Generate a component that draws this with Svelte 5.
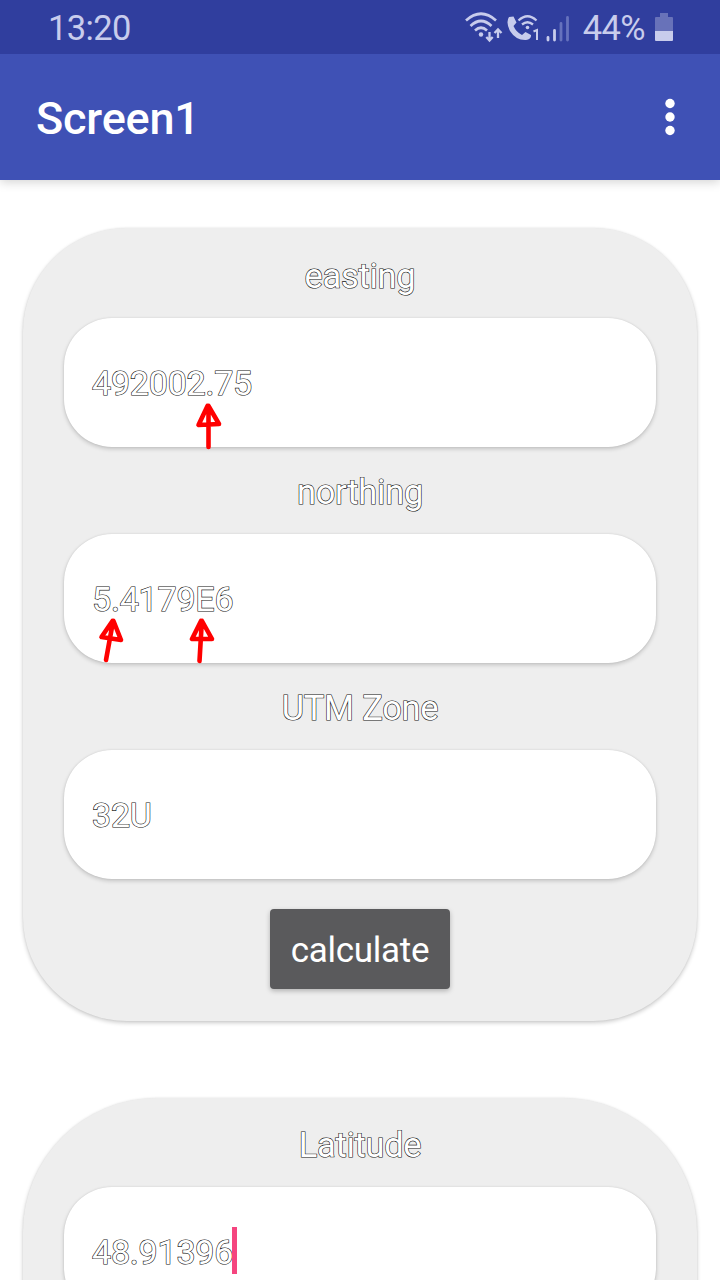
<script>
  const fields = [
    { label: 'easting', value: '492002.75', marks: [{ x: 131, y: 84, d: 'M13.500 45V10 M12.500 4 L3.500 23 L24 22 L13.500 4' }] },
    { label: 'northing', value: '5.4179E6', marks: [
      { x: 34, y: 83, d: 'M8 43 L14 10 M14.500 4 L3.500 20 L23 23 L15.500 4' },
      { x: 125, y: 83, d: 'M10.500 44 L12.500 10 M12 4 L3 22 L23 22 L13 4' }
    ] },
    { label: 'UTM Zone', value: '32U', marks: [] }
  ];
</script>

<div class="screen">
  <div class="status">
    <time>13:20</time>
    <div class="indicators">
      <svg width="112" height="36" viewBox="0 0 112 36" fill="none" stroke="#c8ccec">
        <g stroke-width="2.700">
          <path d="M2 11.500Q17 -2 32 11.500" />
          <path d="M6.500 17Q17 7 27.500 17" />
          <path d="M11 21.500Q17 16 23 21.500" />
        </g>
        <circle cx="17" cy="25.500" r="2.200" fill="#c8ccec" stroke="none" />
        <path d="M25.500 23V31.500M22.300 28L25.500 31.500L28.700 28M34 29V21M30.500 24L34 20.500L37.500 24" stroke-width="2.300" />
        <path d="M45 8L49.500 7.500L52.500 13.500L49.500 17Q52 23 58 26L61.500 23L67 26Q67.500 30 62 31Q52 31.500 46 22Q41.500 13 45 8Z" fill="#c8ccec" stroke="none" />
        <path d="M54.500 11.500Q63.500 3 72.500 11.500M58 15.500Q63.500 11 69 15.500" stroke-width="2.300" />
        <circle cx="63.500" cy="18.500" r="1.800" fill="#c8ccec" stroke="none" />
        <path d="M69.500 22.500L73 21V31" stroke-width="2" />
        <g stroke-linecap="round" stroke-width="2.800">
          <path d="M84 28.500V31" /><path d="M90.500 21.500V31" />
          <path d="M97 14.500V31M103.500 8.500V31" stroke="#6672bd" />
        </g>
      </svg>
      <span>44%</span>
      <svg class="battery" width="18" height="28" viewBox="0 0 18 28">
        <path d="M5 0H13V4H17Q18 4 18 5V18H0V5Q0 4 1 4H5Z" fill="#6872b9" />
        <path d="M0 18H18V27Q18 28 17 28H1Q0 28 0 27Z" fill="#c8ccec" />
      </svg>
    </div>
  </div>
  <header>
    <h1>Screen1</h1>
    <svg width="10" height="38" viewBox="0 0 10 38" fill="#fff">
      <circle cx="5" cy="5.500" r="4.700" /><circle cx="5" cy="19" r="4.700" /><circle cx="5" cy="32.500" r="4.700" />
    </svg>
  </header>
  <main>
    <section class="card">
      {#each fields as f}
        <div class="label outlined">{f.label}</div>
        <div class="field">
          <span class="outlined">{f.value}</span>
          {#each f.marks as m}
            <svg class="mark" style="left:{m.x}px;top:{m.y}px" width="27" height="49" viewBox="0 0 27 49"><path d={m.d} /></svg>
          {/each}
        </div>
      {/each}
      <button>calculate</button>
    </section>
    <section class="card">
      <div class="label outlined">Latitude</div>
      <div class="field"><span class="outlined">48.91396</span><i class="caret"></i></div>
    </section>
  </main>
</div>

<style>
  .screen { width: 720px; height: 1280px; overflow: hidden; background: #fff; font-family: Roboto, sans-serif; display: flex; flex-direction: column; }
  .status { position: relative; z-index: 1; flex: none; box-sizing: border-box; height: 54px; padding: 0 47px 0 48px; background: #303e9e; color: #c8ccec; display: flex; align-items: center; justify-content: space-between; font-size: 34.500px; }
  .status time, .status span { line-height: 54px; padding-top: 2px; letter-spacing: -.6px; }
  .indicators { display: flex; align-items: center; }
  .indicators span { margin: 0 10px 0 7px; }
  header { flex: none; box-sizing: border-box; height: 126px; padding: 0 45px 0 36px; background: #3f51b5; color: #fff; display: flex; align-items: center; justify-content: space-between; box-shadow: 0 2px 10px rgba(0,0,0,.18); }
  h1 { margin: 3px 0 0; font-size: 45px; font-weight: 500; line-height: 60px; letter-spacing: -.2px; }
  main { display: flex; flex-direction: column; gap: 77px; padding: 48px 23px 0; }
  .card { box-sizing: border-box; flex: none; height: 793px; padding: 3px 41px 0; border-radius: 104px; background: #eee; box-shadow: 0 2px 4px rgba(0,0,0,.2), 0 0 2px rgba(0,0,0,.08); display: flex; flex-direction: column; align-items: center; }
  .card + .card { padding-top: 2px; border-radius: 134px; }
  .label { height: 87px; line-height: 91px; font-size: 34.400px; letter-spacing: -.25px; }
  .outlined { color: #fff; -webkit-text-stroke: 1.200px #111; paint-order: stroke fill; }
  .field { position: relative; box-sizing: border-box; width: 100%; height: 129px; padding: 1px 28px 0; border-radius: 48px; background: #fff; box-shadow: 0 2px 4px rgba(0,0,0,.18), 0 0 2px rgba(0,0,0,.1); display: flex; align-items: center; font-size: 34px; letter-spacing: -.2px; }
  .mark { position: absolute; fill: none; stroke: #f00; stroke-width: 4.600; stroke-linecap: round; stroke-linejoin: round; }
  .caret { width: 5px; height: 47px; margin: -4px 0 0 -1px; background: #f5457f; }
  button { width: 180px; height: 80px; margin-top: 30px; padding: 2px 0 0; border: 0; border-radius: 4px; background: #5a5a5c; color: #fff; font: 35px Roboto, sans-serif; letter-spacing: -.3px; box-shadow: 0 2px 5px rgba(0,0,0,.25); }
</style>
